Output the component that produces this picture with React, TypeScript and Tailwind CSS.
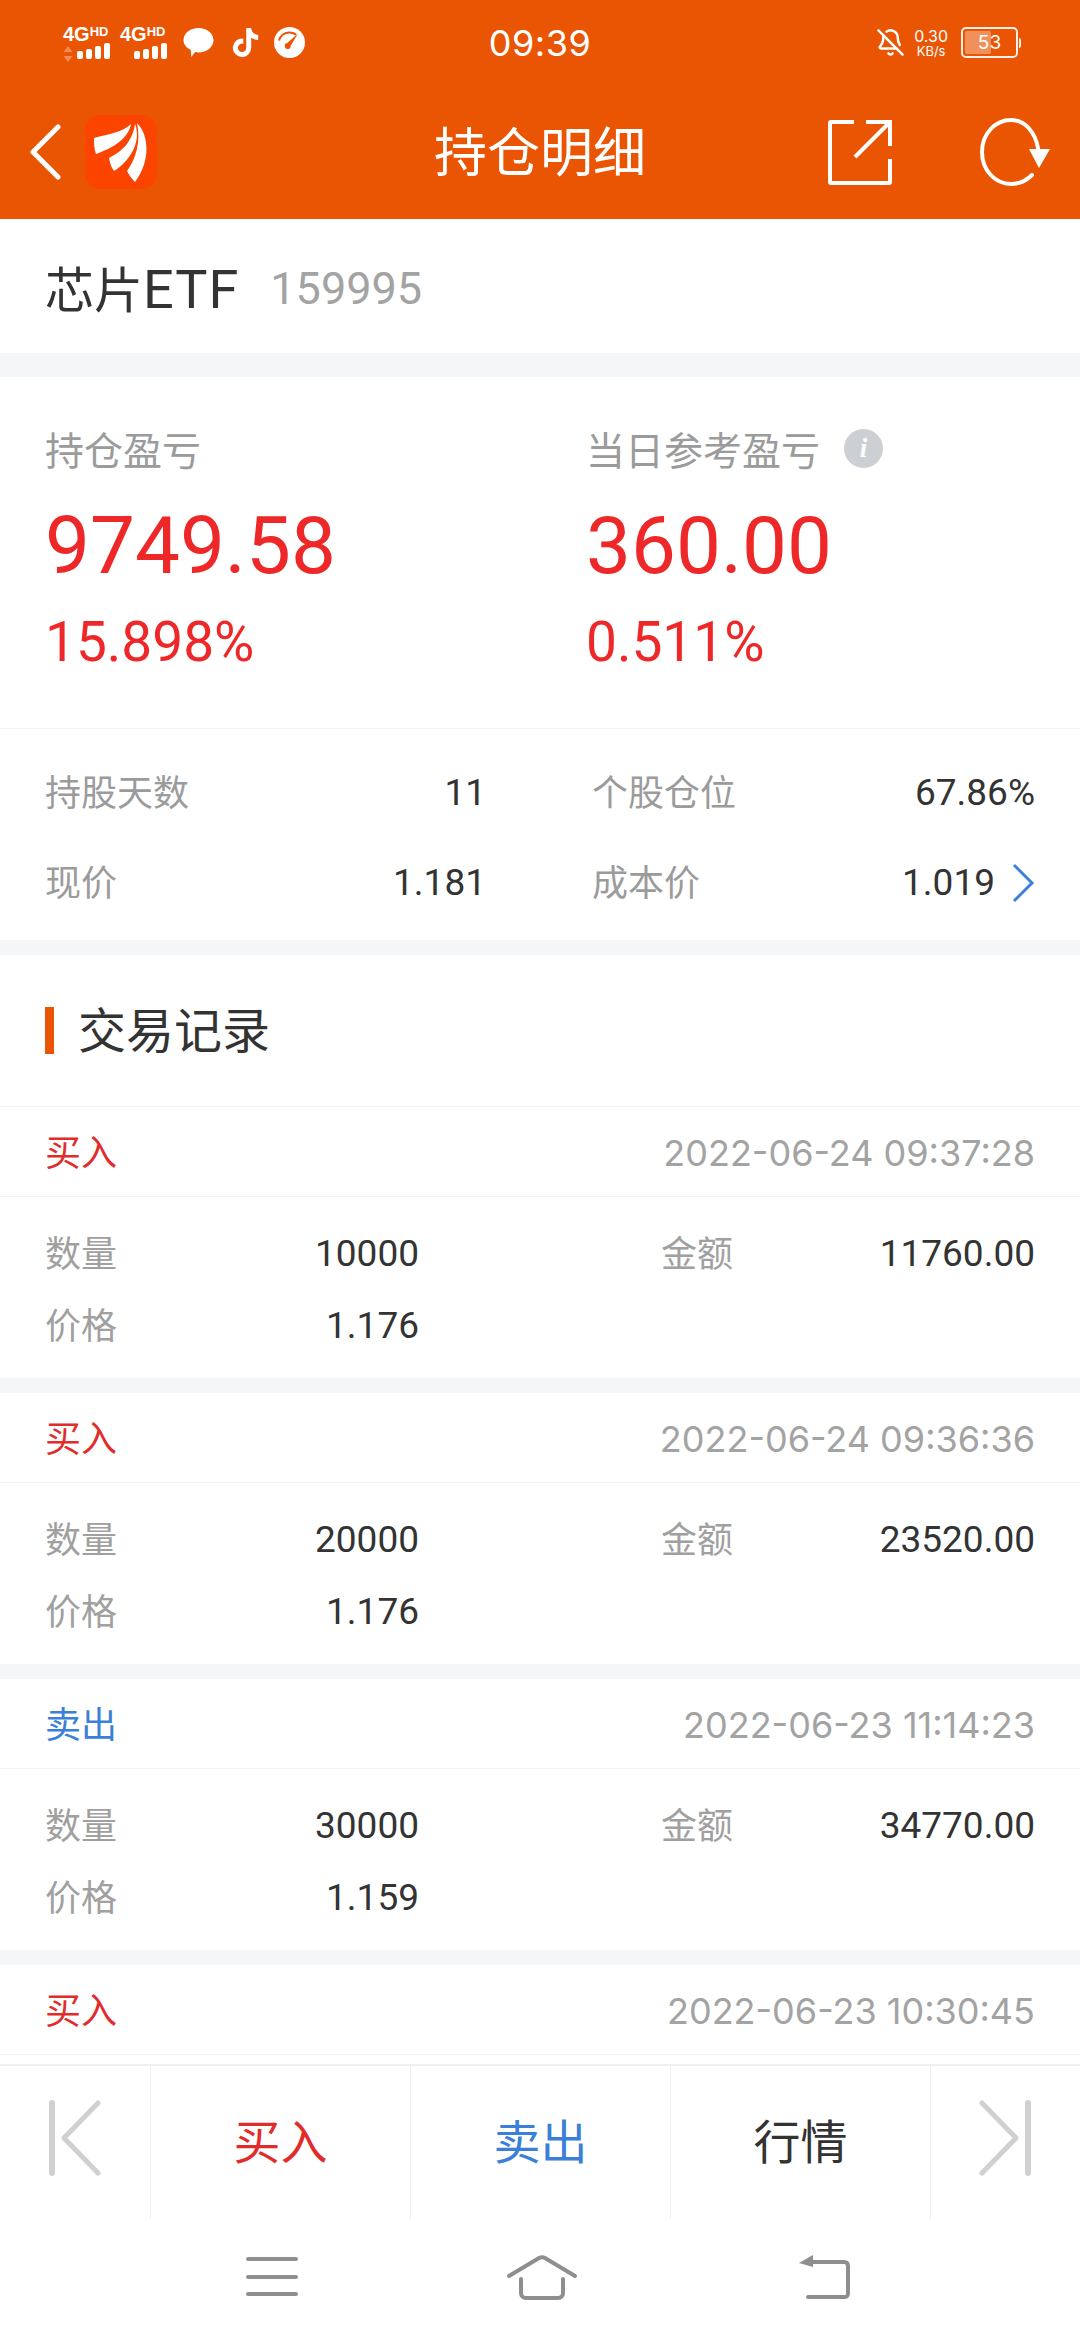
import React from "react";
import { BellOff } from "lucide-react";
import { FaTiktok } from "react-icons/fa6";

const FONT = "font-['Inter','Noto_Sans_CJK_SC',sans-serif]";
const NUM = "font-['Roboto','Noto_Sans_CJK_SC',sans-serif]";

type Trade = { side: "买入" | "卖出"; time: string; qty: string; price: string; amount: string };

const trades: Trade[] = [
  { side: "买入", time: "2022-06-24 09:37:28", qty: "10000", price: "1.176", amount: "11760.00" },
  { side: "买入", time: "2022-06-24 09:36:36", qty: "20000", price: "1.176", amount: "23520.00" },
  { side: "卖出", time: "2022-06-23 11:14:23", qty: "30000", price: "1.159", amount: "34770.00" },
];

function Signal({ showArrows }: { showArrows?: boolean }) {
  return (
    <div className="w-[47px] h-[34px] flex flex-col text-white leading-none font-['Liberation_Sans',sans-serif]">
      <div className="flex items-start h-[16px] font-bold">
        <span className="text-[20px] leading-[16px]">4G</span>
        <span className="text-[13px] leading-[11px]">HD</span>
      </div>
      <div className="relative w-[47px] h-[18px] flex items-end justify-end gap-[3px] pb-[1px]">
        {showArrows && (
          <svg className="absolute left-0 bottom-[-2px]" width="10" height="16" viewBox="0 0 10 16">
            <path d="M5 0l4.500 6h-9zM5 16l4.500-6h-9z" fill="#f58a55" />
          </svg>
        )}
        <i className="w-[6px] h-[8px] rounded-[2px] bg-white" />
        <i className="w-[6px] h-[10px] rounded-[2px] bg-white" />
        <i className="w-[6px] h-[13px] rounded-[2px] bg-white" />
        <i className="w-[6px] h-[16px] rounded-[2px] bg-white" />
      </div>
    </div>
  );
}

function StatusBar() {
  return (
    <div className="grid grid-cols-[1fr_auto_1fr] items-center h-[84px] pt-[1px] text-white">
      <div className="flex items-center pl-[63px]">
        <Signal showArrows />
        <div className="ml-[10px]">
          <Signal />
        </div>
        <svg className="ml-[16px]" width="31" height="31" viewBox="0 0 31 31">
          <path d="M15.500 1C23.800 1 30.500 6.400 30.500 13.200s-6.700 12.200-15 12.200c-1.400 0-2.300-.1-3.500-.4L8.400 30l-.7-7.200C3.400 20.600.5 17.200.5 13.200.5 6.400 7.200 1 15.500 1z" fill="#fff" />
        </svg>
        <FaTiktok className="ml-[17px]" size={29} color="#fff" />
        <svg className="ml-[14px]" width="31" height="31" viewBox="0 0 31 31">
          <circle cx="15.500" cy="15.500" r="15.500" fill="#fff" />
          <path d="M5 13.500C6.500 8.500 10.800 5.500 15.500 5.500c2.600 0 4.600.7 6.500 2" fill="none" stroke="#ea5504" strokeWidth="2.200" />
          <path d="M24 6.500l-7.300 12.200a3 3 0 1 1-3.500-2.700z" fill="#ea5504" />
        </svg>
      </div>
      <div className="text-[36px] leading-none tracking-[0.5px]">09:39</div>
      <div className="flex items-center justify-end pr-[59px]">
        <BellOff size={29} strokeWidth={2} color="#fff" />
        <div className="ml-[9px] flex flex-col items-center text-[14px] leading-[15px]">
          <span className="text-[16px] leading-[16px]">0.30</span>
          <span className="text-[13px] leading-[14px]">KB/s</span>
        </div>
        <div className="ml-[13px] flex items-center">
          <div className="relative w-[57px] h-[31px] rounded-[5px] border-[2px] border-white/90 p-[2px]">
            <div className="h-full w-[53%] rounded-[2px] bg-white/35" />
            <span className="absolute inset-0 flex items-center justify-center text-[19px] leading-none">53</span>
          </div>
          <i className="ml-[1px] w-[2px] h-[10px] rounded-r bg-white/90" />
        </div>
      </div>
    </div>
  );
}

function AppMark() {
  return (
    <div className="ml-[23px] w-[72px] h-[74px] rounded-[16px] bg-[#fb4400] flex items-center justify-center">
      <svg width="72" height="74" viewBox="0 0 72 74">
        <path d="M9 23C24 19 38 17 46 9 44 20 34 31 11 39 9 34 9 28 9 23z" fill="#fff" />
        <path d="M24 43C36 37 47 28 50 9 56 24 48 44 29 56 26 52 25 48 24 43z" fill="#fff" />
        <path d="M42 56C51 44 56 26 52 8 64 20 66 46 50 67 47 64 44 60 42 56z" fill="#fff" />
      </svg>
    </div>
  );
}

function TitleBar() {
  return (
    <div className="grid grid-cols-[1fr_auto_1fr] items-center h-[135px] text-white">
      <div className="flex items-center pl-[29px]">
        <svg width="33" height="56" viewBox="0 0 33 56">
          <path d="M29 3L4 28l25 25" fill="none" stroke="#fff" strokeWidth="5" strokeLinecap="round" strokeLinejoin="round" />
        </svg>
        <AppMark />
      </div>
      <div className="text-[53px] leading-none pt-[4px]">持仓明细</div>
      <div className="flex items-center justify-end pr-[29px] gap-[87px]">
        <svg width="64" height="66" viewBox="0 0 64 66">
          <path d="M26 3H3a1 1 0 0 0-1 1v59a1 1 0 0 0 1 1h58a1 1 0 0 0 1-1V40" fill="none" stroke="#fff" strokeWidth="4" />
          <path d="M38 3H62V27M62 3L27 38" fill="none" stroke="#fff" strokeWidth="4" />
        </svg>
        <svg width="72" height="68" viewBox="0 0 72 68">
          <path d="M59 30C56 14 46 2 32 2 16 2 3 16 3 34s13 32 29 32c9 0 15-3 21-9" fill="none" stroke="#fff" strokeWidth="4" strokeLinecap="round" />
          <path d="M50 31h21L60 50z" fill="#fff" />
        </svg>
      </div>
    </div>
  );
}

function Stat({ label, value, pct, info }: { label: string; value: string; pct: string; info?: boolean }) {
  return (
    <div className="flex flex-col">
      <div className="flex items-center h-[60px]">
        <span className="text-[39px] leading-none text-[#9b9b9b]">{label}</span>
        {info && (
          <span className="ml-[24px] w-[39px] h-[39px] -translate-y-[2px] rounded-full bg-[#ccd0d5] flex items-center justify-center text-white italic font-bold text-[27px] font-['Liberation_Serif',serif]">
            i
          </span>
        )}
      </div>
      <div className={`${NUM} text-[80px] leading-[90px] mt-[21px] text-[#ee2828]`}>{value}</div>
      <div className={`${NUM} text-[55px] leading-[60px] mt-[21px] text-[#ee2828]`}>{pct}</div>
    </div>
  );
}

function KV({ label, value, chevron }: { label: string; value: string; chevron?: boolean }) {
  return (
    <div className="flex items-center justify-between h-[90px]">
      <span className="text-[36px] text-[#9b9b9b]">{label}</span>
      <span className={`${NUM} flex items-center text-[37px] text-[#333333]`}>
        {value}
        {chevron && (
          <svg className="ml-[16px]" width="24" height="40" viewBox="0 0 24 40">
            <path d="M3 2l18 18L3 38" fill="none" stroke="#3a7fdb" strokeWidth="3" />
          </svg>
        )}
      </span>
    </div>
  );
}

function TradeHead({ side, time }: { side: string; time: string }) {
  const sideColor = side === "买入" ? "text-[#e22b2b]" : "text-[#3a7fd8]";
  return (
    <div className="flex items-center justify-between h-[90px] pt-[2px] px-[45px] border-b border-[#f3f3f3]">
      <span className={`text-[36px] ${sideColor}`}>{side}</span>
      <span className="text-[36px] text-[#a3a3a3]">{time}</span>
    </div>
  );
}

function Row({ label, value }: { label: string; value: string }) {
  return (
    <div className="flex items-center justify-between h-[72px]">
      <span className="text-[36px] text-[#a0a0a0]">{label}</span>
      <span className={`${NUM} text-[37px] text-[#333333]`}>{value}</span>
    </div>
  );
}

function TradeCard({ trade }: { trade: Trade }) {
  return (
    <div className="bg-white">
      <TradeHead side={trade.side} time={trade.time} />
      <div className="h-[181px] pt-[21px] px-[45px] grid grid-cols-[374px_1fr] gap-x-[242px]">
        <div>
          <Row label="数量" value={trade.qty} />
          <Row label="价格" value={trade.price} />
        </div>
        <div>
          <Row label="金额" value={trade.amount} />
        </div>
      </div>
    </div>
  );
}

function EdgeIcon({ flip }: { flip?: boolean }) {
  return (
    <svg className={flip ? "-scale-x-100" : ""} width="52" height="76" viewBox="0 0 52 76">
      <path d="M3 3v70" fill="none" stroke="#d0d0d0" strokeWidth="6" strokeLinecap="round" />
      <path d="M49 3L15 38l34 35" fill="none" stroke="#d0d0d0" strokeWidth="5" strokeLinecap="round" strokeLinejoin="round" />
    </svg>
  );
}

function ActionBar() {
  return (
    <div className="h-[155px] flex border-t-2 border-[#f0f0f0] bg-white">
      <div className="w-[150px] flex items-center justify-start pl-[49px] pb-[10px]">
        <EdgeIcon />
      </div>
      {[
        ["买入", "text-[#e22b2b]"],
        ["卖出", "text-[#3a7fd8]"],
        ["行情", "text-[#333333]"],
      ].map(([text, color]) => (
        <div key={text} className={`w-[260px] border-l border-[#efefef] flex items-center justify-center text-[47px] ${color}`}>
          {text}
        </div>
      ))}
      <div className="flex-1 border-l border-[#efefef] flex items-center justify-end pr-[49px] pb-[10px]">
        <EdgeIcon flip />
      </div>
    </div>
  );
}

function NavBar() {
  return (
    <div className="h-[121px] flex items-center pl-[246px] pb-[6px] bg-white">
      <svg width="52" height="42" viewBox="0 0 52 42">
        <path d="M2 3h48M2 21h48M2 38h48" stroke="#8e8e8e" strokeWidth="4" strokeLinecap="round" />
      </svg>
      <svg className="ml-[208px]" width="72" height="46" viewBox="0 0 72 46">
        <path d="M3 22L33 4c2-1 4-1 6 0l30 18" fill="none" stroke="#8e8e8e" strokeWidth="4" strokeLinecap="round" />
        <path d="M15 25v14c0 3 2 5 5 5h32c3 0 5-2 5-5V25" fill="none" stroke="#8e8e8e" strokeWidth="4" strokeLinecap="round" />
      </svg>
      <svg className="ml-[220px]" width="52" height="44" viewBox="0 0 52 44">
        <path d="M14 7h32c3 0 4 2 4 4v27c0 3-1 4-4 4H10" fill="none" stroke="#8e8e8e" strokeWidth="4" strokeLinecap="round" />
        <path d="M15 0v12L1 8z" fill="#8e8e8e" />
      </svg>
    </div>
  );
}

export default function App() {
  return (
    <div className={`${FONT} w-[1080px] h-[2340px] flex flex-col overflow-hidden bg-white`}>
      <header className="bg-[#ea5504] h-[219px] shrink-0">
        <StatusBar />
        <TitleBar />
      </header>

      <main className="flex-1 min-h-0 overflow-hidden bg-[#f5f6f8] flex flex-col">
        <div className="bg-white h-[134px] shrink-0 flex items-center pt-[6px] px-[45px]">
          <span className="text-[49px] text-[#333333]">
            芯片<span className={`${NUM} text-[54px] tracking-[1px]`}>ETF</span>
          </span>
          <span className={`${NUM} ml-[31px] text-[45px] text-[#a3a3a3]`}>159995</span>
        </div>

        <section className="bg-white mt-[24px] shrink-0">
          <div className="h-[352px] pt-[43px] pl-[45px] grid grid-cols-[541px_1fr] border-b border-[#f3f3f3]">
            <Stat label="持仓盈亏" value="9749.58" pct="15.898%" />
            <Stat label="当日参考盈亏" value="360.00" pct="0.511%" info />
          </div>
          <div className="h-[211px] pt-[19px] px-[45px] grid grid-cols-[441px_443px] gap-x-[106px]">
            <div>
              <KV label="持股天数" value="11" />
              <KV label="现价" value="1.181" />
            </div>
            <div>
              <KV label="个股仓位" value="67.86%" />
              <KV label="成本价" value="1.019" chevron />
            </div>
          </div>
        </section>

        <section className="mt-[15px] flex flex-col gap-[15px] shrink-0">
          <div className="bg-white">
            <div className="h-[152px] flex items-center px-[45px] border-b border-[#f3f3f3]">
              <i className="w-[9px] h-[47px] bg-[#ea5504]" />
              <span className="ml-[24px] text-[48px] text-[#333333]">交易记录</span>
            </div>
            <TradeCard trade={trades[0]} />
          </div>
          <TradeCard trade={trades[1]} />
          <TradeCard trade={trades[2]} />
          <div className="bg-white pb-[40px]">
            <TradeHead side="买入" time="2022-06-23 10:30:45" />
          </div>
        </section>
      </main>

      <ActionBar />
      <NavBar />
    </div>
  );
}
